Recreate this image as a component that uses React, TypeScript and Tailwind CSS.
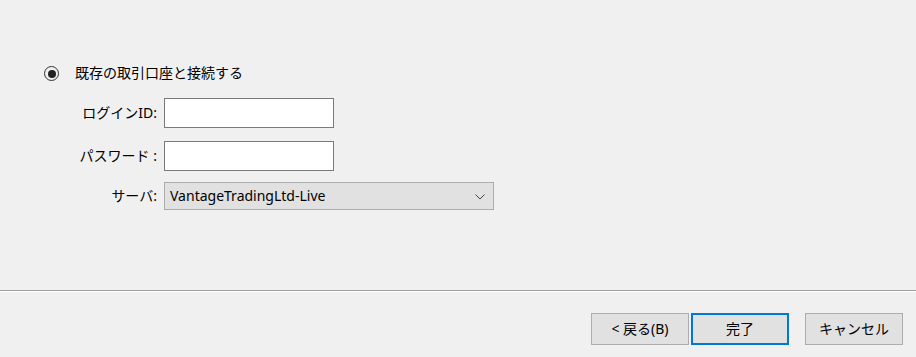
import React from "react";

const font = { fontFamily: '"Noto Sans", "Noto Sans CJK JP", sans-serif' };

export default function App() {
  return (
    <div
      className="w-[916px] h-[357px] bg-[#f0f0f0] text-[14px] text-[#000] flex flex-col overflow-hidden"
      style={font}
    >
      <div className="h-[290px] flex flex-col">
        <div className="mt-[66px] ml-[44px] flex items-center h-[15px]">
          <span className="w-[15px] h-[15px] rounded-full border border-[#333] flex items-center justify-center">
            <span className="w-[8px] h-[8px] rounded-full bg-[#222]" />
          </span>
          <span className="ml-[16px] leading-[20px] -mt-[2px]">既存の取引口座と接続する</span>
        </div>

        <div className="mt-[17px] flex items-center">
          <span className="w-[157px] text-right leading-[20px]">ログインID:</span>
          <div className="ml-[7px] w-[170px] h-[30px] bg-white border border-[#7a7a7a]" />
        </div>

        <div className="mt-[13px] flex items-center">
          <span className="w-[157px] text-right leading-[20px]">パスワード :</span>
          <div className="ml-[7px] w-[170px] h-[30px] bg-white border border-[#7a7a7a]" />
        </div>

        <div className="mt-[11px] flex items-center">
          <span className="w-[157px] text-right leading-[20px]">サーバ:</span>
          <div className="ml-[7px] w-[330px] h-[28px] bg-[#e1e1e1] border border-[#adadad] flex items-center pl-[5px] pr-[8px]">
            <span className="flex-1 leading-[20px]">VantageTradingLtd-Live</span>
            <svg width="10" height="6" viewBox="0 0 10 6" className="mt-[1px]">
              <path d="M0.5 0.5 L5 5 L9.5 0.5" fill="none" stroke="#444" strokeWidth="1" />
            </svg>
          </div>
        </div>
      </div>

      <div className="h-[1px] bg-[#a0a0a0]" />
      <div className="h-[1px] bg-[#ffffff]" />

      <div className="mt-[21px] flex pl-[591px]">
        <button className="w-[98px] h-[32px] bg-[#e1e1e1] border border-[#adadad] leading-[20px]">
          &lt; 戻る(B)
        </button>
        <button className="ml-[2px] w-[98px] h-[32px] bg-[#e1e1e1] border-2 border-[#0078d7] leading-[20px]">
          完了
        </button>
        <button className="ml-[16px] w-[98px] h-[32px] bg-[#e1e1e1] border border-[#adadad] leading-[20px]">
          キャンセル
        </button>
      </div>
    </div>
  );
}
